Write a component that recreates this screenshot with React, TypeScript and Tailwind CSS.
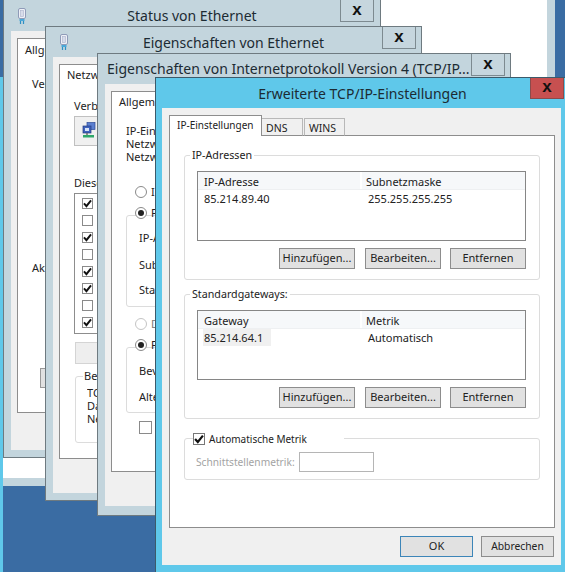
import React from "react";

const Check = ({ size = 11 }: { size?: number }) => (
  <svg width={size} height={size} viewBox="0 0 11 11" className="block">
    <path d="M1.2 5.4 L4.2 8.8 L9.8 1.8" fill="none" stroke="#111" strokeWidth="2.4" />
  </svg>
);

const Box = ({ on }: { on?: boolean }) => (
  <div className="w-[11px] h-[11px] shrink-0 border border-[#8a8a8a] bg-white flex items-center justify-center">
    {on ? <Check size={9} /> : null}
  </div>
);

const Radio = ({ on, off }: { on?: boolean; off?: boolean }) => (
  <div
    className={
      off
        ? "w-[12px] h-[12px] shrink-0 rounded-full border border-[#c4c4c4] bg-white"
        : "w-[12px] h-[12px] shrink-0 rounded-full border border-[#8a8a8a] bg-white flex items-center justify-center"
    }
  >
    {on ? <div className="w-[6px] h-[6px] rounded-full bg-[#222]" /> : null}
  </div>
);

const Adapter = () => (
  <svg width="10" height="16" viewBox="0 0 10 16" className="block">
    <rect x="1.5" y="0.5" width="7" height="10" rx="1.5" fill="#eef0f6" stroke="#8f9bb8" />
    <rect x="3.5" y="2.5" width="3" height="6" fill="#d8dcea" stroke="#aab2cc" strokeWidth="0.6" />
    <rect x="2.5" y="11" width="5" height="2" fill="#4aa8d8" />
    <path d="M3.5 13 V16 M6.5 13 V16" stroke="#2f8fc4" strokeWidth="1.2" />
  </svg>
);

const NetIcon = () => (
  <svg width="14" height="16" viewBox="0 0 14 16" className="block">
    <rect x="5" y="0.5" width="8" height="7" fill="#5b7fd0" stroke="#2c4a96" strokeWidth="0.7" />
    <rect x="1" y="4" width="8" height="7" fill="#3f63bd" stroke="#23397f" strokeWidth="0.7" />
    <rect x="3" y="6" width="4" height="3" fill="#d6e2fa" />
    <path d="M5 11 V13" stroke="#666" strokeWidth="1.4" />
    <rect x="1" y="13" width="11" height="2.5" fill="#2fa86a" />
  </svg>
);

const Close = ({ red }: { red?: boolean }) => (
  <div
    className={
      red
        ? "w-[34px] h-[22px] bg-[#c75050] border border-[#8c4a4a] flex items-center justify-center text-[17px] leading-none font-bold text-[#111]"
        : "w-[34px] h-[22px] bg-[#c6d6de] border border-t-0 border-[#7d8a90] flex items-center justify-center text-[17px] leading-none font-bold text-[#111]"
    }
  >
    <span className="-mt-[3px] font-['Liberation_Sans',sans-serif]">x</span>
  </div>
);

const Btn = ({ children }: { children: React.ReactNode }) => (
  <div className="w-[76px] h-[21px] border border-[#8d8d8d] bg-[#e1e1e1] flex items-center justify-center text-[11px] text-[#222]">
    {children}
  </div>
);

const Group = ({
  label,
  children,
}: {
  label: string;
  children: React.ReactNode;
}) => (
  <div className="relative h-[125px] border border-[#dcdcdc] rounded-[3px] pl-[12px] pr-[13px] pt-[15px]">
    <div className="absolute -top-[9px] left-[5px] bg-white px-[2px] text-[10.7px] leading-[16px] text-[#222]">
      {label}
    </div>
    {children}
  </div>
);

const ListView = ({
  a,
  b,
  v,
  w,
  sel,
}: {
  a: string;
  b: string;
  v: string;
  w: string;
  sel?: boolean;
}) => (
  <div className="h-[70px] border border-[#868686] bg-white text-[11px] text-[#222]">
    <div className="flex h-[18px] bg-[#f6f8fa] leading-[19px] border-b border-[#eef0f2]">
      <div className="w-[164px] pl-[6px] border-r-2 border-white">{a}</div>
      <div className="pl-[4px]">{b}</div>
    </div>
    <div className="flex h-[17px] leading-[17px]">
      <div className="w-[164px] pl-[5px]">
        <span className={sel ? "inline-block w-[68px] pl-[1px] bg-[#f0f0f0]" : "inline-block pl-[1px]"}>{v}</span>
      </div>
      <div className="pl-[6px]">{w}</div>
    </div>
  </div>
);

const Buttons = () => (
  <div className="flex justify-end gap-[10px] mt-[7px]">
    <Btn>Hinzufügen...</Btn>
    <Btn>Bearbeiten...</Btn>
    <div className="-ml-px">
      <Btn>Entfernen</Btn>
    </div>
  </div>
);

export default function App() {
  return (
    <div className="relative w-[565px] h-[572px] overflow-hidden bg-[#3a6ca3] font-['Noto_Sans',sans-serif] text-[11px] text-[#222]">
      {/* desktop pieces behind the dialogs */}
      <div className="absolute left-[3px] -top-[10px] w-[552px] h-[496px] bg-white border-r-8 border-b-8 border-[#c3d5dd]" />
      <div className="absolute left-0 top-[77px] bottom-0 w-[3px] bg-[#5fc8ea]" />

      {/* Status von Ethernet */}
      <div className="absolute left-[3px] -top-px w-[378px] h-[459px] bg-[#c3d5dd] border border-[#6e7a80] flex flex-col overflow-hidden">
        <div className="relative h-[31px] shrink-0 flex items-center justify-center text-[14px] text-[#1c2b33]">
          <div className="absolute left-[13px] top-[8px]"><Adapter /></div>
          <span>Status von Ethernet</span>
          <div className="absolute right-[6px] top-0"><Close /></div>
        </div>
        <div className="ml-[7px] mr-[7px] mb-[7px] flex-1 bg-[#f0f0f0] pl-[6px] pt-[7px]">
          <div className="h-[375px] bg-white border border-[#8d8d8d] pl-[14px] pt-[3px]">
            <div className="-ml-[7px] leading-[16px]">Allge</div>
            <div className="mt-[18px] leading-[16px]">Ver</div>
            <div className="mt-[168px] leading-[16px]">Akt</div>
            <div className="mt-[92px] ml-[8px] w-[80px] h-[20px] bg-[#e1e1e1] border border-[#999]" />
          </div>
        </div>
      </div>

      {/* Eigenschaften von Ethernet */}
      <div className="absolute left-[45px] top-[26px] w-[377px] h-[475px] bg-[#c3d5dd] border border-[#6e7a80] flex flex-col overflow-hidden">
        <div className="relative h-[30px] shrink-0 flex items-center justify-center text-[14px] text-[#1c2b33]">
          <div className="absolute left-[13px] top-[7px]"><Adapter /></div>
          <span>Eigenschaften von Ethernet</span>
          <div className="absolute right-[5px] top-0"><Close /></div>
        </div>
        <div className="ml-[7px] mr-[7px] mb-[7px] flex-1 bg-[#f0f0f0] pl-[6px] pt-[7px]">
          <div className="h-[395px] bg-white border border-[#8d8d8d] pl-[14px] pt-[2px]">
            <div className="-ml-[7px] leading-[16px]">Netzw</div>
            <div className="mt-[15px] leading-[16px]">Verbi</div>
            <div className="mt-[2px] w-[200px] h-[30px] bg-[#f0f0f0] border border-[#c0c0c0] pl-[7px] pt-[5px]"><NetIcon /></div>
            <div className="mt-[29px] leading-[16px] whitespace-nowrap">Diese</div>
            <div className="mt-[2px] w-[200px] h-[141px] border border-[#8d8d8d] pl-[7px] pt-[4px] flex flex-col gap-[6px]">
              <Box on /><Box /><Box on /><Box /><Box on /><Box on /><Box /><Box on />
            </div>
            <div className="mt-[8px] w-[76px] h-[22px] bg-[#eeeeee] border border-[#d4d4d4] ml-[1px]" />
            <div className="relative mt-[12px] ml-[1px] w-[300px] h-[67px] border border-[#dcdcdc] rounded-[3px] pl-[11px] pt-[9px] leading-[13px] whitespace-nowrap">
              <div className="absolute -top-[9px] left-[7px] bg-white px-[1px] leading-[16px]">Bes</div>
              <div className="w-[10px] overflow-hidden">TC</div>
              <div className="w-[10px] overflow-hidden">Da</div>
              <div className="w-[10px] overflow-hidden">Ne</div>
            </div>
          </div>
        </div>
      </div>

      {/* Eigenschaften von Internetprotokoll */}
      <div className="absolute left-[97px] top-[53px] w-[414px] h-[463px] bg-[#c3d5dd] border border-[#6e7a80] flex flex-col overflow-hidden">
        <div className="relative h-[30px] shrink-0 text-[14px] leading-[30px] pl-[9px] text-[#1c2b33] whitespace-nowrap">
          <span>Eigenschaften von Internetprotokoll Version 4 (TCP/IP...</span>
          <div className="absolute right-[5px] top-0"><Close /></div>
        </div>
        <div className="ml-[7px] mr-[7px] mb-[9px] flex-1 bg-[#f0f0f0] pl-[6px] pt-[7px]">
          <div className="h-[381px] bg-white border border-[#8d8d8d] pl-[14px] pt-[2px] whitespace-nowrap">
            <div className="-ml-[7px] leading-[16px]">Allgeme</div>
            <div className="mt-[14px] leading-[13px]">
              <div className="w-[29px] overflow-hidden">IP-Eins</div>
              <div>Netzw</div>
              <div>Netzw</div>
            </div>
            <div className="mt-[21px] ml-[9px] flex items-center gap-[4px] h-[16px]"><Radio /><span>I</span></div>
            <div className="mt-[5px] ml-[9px] flex items-center gap-[4px] h-[16px]"><Radio on /><span>F</span></div>
            <div className="-mt-[6px] h-[92px] w-[340px] border border-[#dcdcdc] rounded-[3px] pl-[12px] pt-[14px]">
              <div className="leading-[16px]">IP-A</div>
              <div className="mt-[11px] leading-[16px]">Sub</div>
              <div className="mt-[9px] leading-[16px]">Sta</div>
            </div>
            <div className="mt-[9px] ml-[9px] flex items-center gap-[4px] h-[16px] text-[#777]"><Radio off /><span>D</span></div>
            <div className="mt-[5px] ml-[9px] flex items-center gap-[4px] h-[16px]"><Radio on /><span>F</span></div>
            <div className="-mt-[6px] h-[66px] w-[340px] border border-[#dcdcdc] rounded-[3px] pl-[12px] pt-[15px]">
              <div className="leading-[16px]">Bev</div>
              <div className="mt-[10px] leading-[16px]">Alte</div>
            </div>
            <div className="mt-[8px] ml-[13px] w-[13px] h-[13px] border border-[#8a8a8a]" />
          </div>
        </div>
      </div>

      {/* Erweiterte TCP/IP-Einstellungen */}
      <div className="absolute left-[155px] top-[77px] w-[411px] h-[496px] bg-[#5fc8ea] border border-[#3c5a6a] flex flex-col overflow-hidden">
        <div className="relative h-[30px] shrink-0 flex items-center justify-center text-[14px] text-[#1c2b33] pl-[4px]">
          <span>Erweiterte TCP/IP-Einstellungen</span>
          <div className="absolute right-[1px] -top-px"><Close red /></div>
        </div>
        <div className="ml-[6px] mr-[4px] mb-[7px] flex-1 bg-[#f0f0f0] pl-[7px] pr-[6px] pt-[7px] flex flex-col">
          <div className="flex items-end h-[21px] relative z-10 -mb-px whitespace-nowrap">
            <div className="w-[93px] h-[21px] bg-white border border-b-0 border-[#8d8d8d] pl-[7px] leading-[19px] text-[10px]">IP-Einstellungen</div>
            <div className="w-[41px] h-[18px] bg-[#f0f0f0] border border-l-0 border-b-[#8d8d8d] border-[#b8b8b8] pl-[4px] leading-[18px] text-[10.5px]">DNS</div>
            <div className="w-[41px] h-[18px] ml-[1px] bg-[#f0f0f0] border border-b-[#8d8d8d] border-[#b8b8b8] pl-[4px] leading-[18px] text-[10.5px]">WINS</div>
          </div>
          <div className="h-[393px] bg-white border border-[#8d8d8d] px-[14px] pt-[19px] flex flex-col">
            <Group label="IP-Adressen">
              <ListView a="IP-Adresse" b="Subnetzmaske" v="85.214.89.40" w="255.255.255.255" />
              <Buttons />
            </Group>
            <div className="mt-[14px]">
              <Group label="Standardgateways:">
                <ListView a="Gateway" b="Metrik" v="85.214.64.1" w="Automatisch" sel />
                <Buttons />
              </Group>
            </div>
            <div className="relative mt-[19px] h-[42px] border border-[#dcdcdc] rounded-[3px] pl-[11px] pt-[13px] flex items-start">
              <div className="absolute -top-[7px] left-[8px] w-[151px] bg-white flex items-center gap-[4px] h-[14px]">
                <div className="w-[12px] h-[12px] border border-[#777] bg-white flex items-center justify-center"><Check size={10} /></div>
                <span className="text-[10px] text-[#222]">Automatische Metrik</span>
              </div>
              <span className="w-[103px] leading-[20px] text-[10.2px] text-[#a3a3a3] whitespace-nowrap">Schnittstellenmetrik:</span>
              <div className="w-[75px] h-[20px] border border-[#b5b5b5] bg-white" />
            </div>
          </div>
          <div className="flex justify-end gap-[8px] mt-[8px] pr-px">
            <div className="w-[73px] h-[21px] border border-[#3c85b8] bg-[#e1e1e1] flex items-center justify-center">OK</div>
            <div className="w-[73px] h-[21px] border border-[#8d8d8d] bg-[#e1e1e1] flex items-center justify-center text-[10.3px]">Abbrechen</div>
          </div>
        </div>
      </div>
    </div>
  );
}
